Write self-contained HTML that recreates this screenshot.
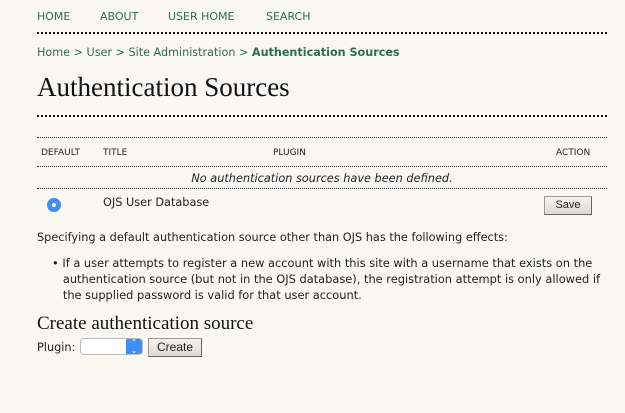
<!DOCTYPE html>
<html><head><style>
body{margin:0;width:625px;height:413px;background:#f9f8f2;font-family:"DejaVu Sans",Verdana,sans-serif;color:#222;position:relative;overflow:hidden}
.a{position:absolute;white-space:nowrap}
.g{color:#2f6b55}
.dot{position:absolute;left:37px;width:570px;border-top:2px dotted #111;height:0}
.dt{position:absolute;left:37px;width:570px;border-top:1px dotted #333;height:0}
.btn{position:absolute;background:linear-gradient(#f4f3ee,#dcdad3);border:1px solid #999;border-right-color:#666;border-bottom-color:#666;font-size:11px;font-family:"Liberation Sans",sans-serif;text-align:center;box-sizing:border-box}
</style></head><body>
<div class="a g" style="left:37px;top:10px;font-size:11px">HOME</div>
<div class="a g" style="left:100px;top:10px;font-size:11px">ABOUT</div>
<div class="a g" style="left:168px;top:10px;font-size:11px">USER HOME</div>
<div class="a g" style="left:266px;top:10px;font-size:11px">SEARCH</div>
<div class="dot" style="top:32px"></div>
<div class="a g" style="left:37px;top:46px;font-size:11.2px">Home &gt; User &gt; Site Administration &gt; <b>Authentication Sources</b></div>
<div class="a" style="left:37px;top:72px;font-size:27px;font-family:'Liberation Serif',serif;color:#111">Authentication Sources</div>
<div class="dot" style="top:115px"></div>
<div class="dt" style="top:137px"></div>
<div class="a" style="left:41px;top:148px;font-size:9px">DEFAULT</div>
<div class="a" style="left:103px;top:148px;font-size:9px">TITLE</div>
<div class="a" style="left:273px;top:148px;font-size:9px">PLUGIN</div>
<div class="a" style="left:556px;top:148px;font-size:9px">ACTION</div>
<div class="dt" style="top:166px"></div>
<div class="a" style="left:0;width:644px;text-align:center;top:172px;font-size:11.3px;font-style:italic">No authentication sources have been defined.</div>
<div class="dt" style="top:188px"></div>
<div class="a" style="left:47px;top:198px;width:14px;height:14px;border-radius:50%;background:#3d8ff5"><div style="position:absolute;left:5px;top:5px;width:4px;height:4px;border-radius:50%;background:#fff"></div></div>
<div class="a" style="left:103px;top:196px;font-size:11.3px">OJS User Database</div>
<div class="btn" style="left:544px;top:196px;width:48px;height:19px;line-height:17px">Save</div>
<div class="a" style="left:37px;top:231px;font-size:11.3px">Specifying a default authentication source other than OJS has the following effects:</div>
<div class="a" style="left:52px;top:255px;font-size:11.4px;line-height:16px">•&nbsp;If a user attempts to register a new account with this site with a username that exists on the<br>&nbsp;&nbsp;&nbsp;authentication source (but not in the OJS database), the registration attempt is only allowed if<br>&nbsp;&nbsp;&nbsp;the supplied password is valid for that user account.</div>
<div class="a" style="left:37px;top:313px;font-size:19px;font-family:'Liberation Serif',serif;color:#111">Create authentication source</div>
<div class="a" style="left:37px;top:341px;font-size:11.3px">Plugin:</div>
<div class="a" style="left:80px;top:338px;width:63px;height:17px;border:1px solid #bbb;border-radius:4px;background:#fff;box-sizing:border-box;overflow:hidden"><div style="position:absolute;right:0;top:0;width:16px;height:17px;background:#3d8ff5;color:#fff;font-size:8px;line-height:8px;text-align:center">⌃<br>⌄</div></div>
<div class="btn" style="left:148px;top:338px;width:54px;height:19px;line-height:17px;font-size:12px">Create</div>
</body></html>
